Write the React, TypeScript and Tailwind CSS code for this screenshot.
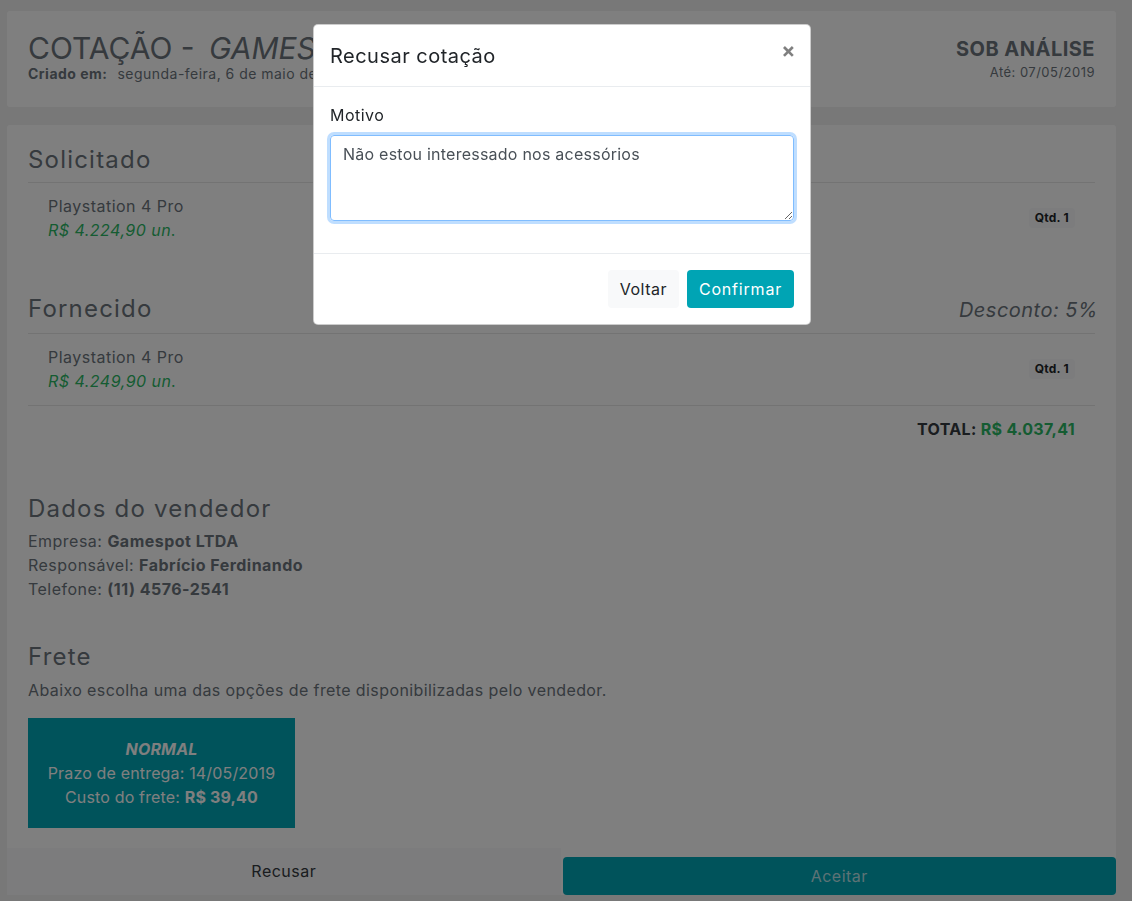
import React from "react";

function Badge() {
  return (
    <span className="rounded-[4px] bg-[#f8f9fa] px-[6px] py-[3px] text-[12px] font-bold leading-[14px] tracking-[0.02em] text-[#212529]">
      Qtd. 1
    </span>
  );
}

export default function App() {
  return (
    <div className="relative h-[901px] w-full overflow-hidden bg-[#f0f0f0] font-['Inter',sans-serif] tracking-[0.03em] text-[#6c757d]">
      <div className="ml-[7px] mr-[16px] pt-[11px]">
        {/* header card */}
        <div className="flex h-[96px] justify-between rounded-[3px] bg-white px-[21px] pt-[20px]">
          <div>
            <div className="text-[30px] leading-[34px] tracking-normal text-[#6c757d]">
              COTAÇÃO - <span className="ml-[6px] italic">GAMESPOT LTDA</span>
            </div>
            <div className="text-[14px] leading-[18px]">
              <span className="font-bold">Criado em:</span>
              <span className="ml-[10px]">segunda-feira, 6 de maio de 2019</span>
            </div>
          </div>
          <div className="pt-[6px] text-right">
            <div className="text-[20px] font-bold leading-[24px]">SOB ANÁLISE</div>
            <div className="mt-[2px] text-[13px] leading-[18px]">Até: 07/05/2019</div>
          </div>
        </div>

        {/* main card */}
        <div className="mt-[18px] rounded-[3px] bg-white">
          <div className="px-[21px] pt-[20px] pb-[20px]">
            <div className="text-[24px] leading-[29px] tracking-[0.05em]">Solicitado</div>
            <div className="mt-[8px] border-t border-[#e6e6e6]" />
            <div className="flex items-center justify-between px-[20px] pt-[11px] pb-[12px]">
              <div className="text-[16px] leading-[24px]">
                <div>Playstation 4 Pro</div>
                <div className="italic text-[#2bb865]">R$ 4.224,90 un.</div>
              </div>
              <Badge />
            </div>

            <div className="mt-[40px] flex items-baseline justify-between">
              <div className="text-[24px] leading-[29px] tracking-[0.05em]">Fornecido</div>
              <div className="-mr-[3px] text-[20px] italic leading-[29px]">Desconto: 5%</div>
            </div>
            <div className="mt-[8px] border-t border-[#e6e6e6]" />
            <div className="flex items-center justify-between px-[20px] pt-[11px] pb-[12px]">
              <div className="text-[16px] leading-[24px]">
                <div>Playstation 4 Pro</div>
                <div className="italic text-[#2bb865]">R$ 4.249,90 un.</div>
              </div>
              <Badge />
            </div>
            <div className="border-t border-[#e6e6e6]" />
            <div className="pt-[11px] pr-[20px] text-right text-[16px] font-bold leading-[24px] tracking-[0.02em] text-[#343a40]">
              TOTAL: <span className="text-[#2bb865]">R$ 4.037,41</span>
            </div>

            <div className="mt-[53px] text-[24px] leading-[29px] tracking-[0.05em]">Dados do vendedor</div>
            <div className="mt-[6px] text-[16px] leading-[24px]">
              <div>
                Empresa: <span className="font-bold">Gamespot LTDA</span>
              </div>
              <div>
                Responsável: <span className="font-bold">Fabrício Ferdinando</span>
              </div>
              <div>
                Telefone: <span className="font-bold">(11) 4576-2541</span>
              </div>
            </div>

            <div className="mt-[41px] text-[24px] leading-[29px] tracking-[0.05em]">Frete</div>
            <div className="mt-[7px] text-[16px] leading-[24px] tracking-[0.025em]">
              Abaixo escolha uma das opções de frete disponibilizadas pelo vendedor.
            </div>
            <div className="mt-[16px] flex w-[267px] flex-col items-center bg-[#00a6b6] py-[19px] text-[16px] leading-[24px] tracking-[0.01em] text-white">
              <div className="font-bold italic">NORMAL</div>
              <div>Prazo de entrega: 14/05/2019</div>
              <div>
                Custo do frete: <span className="font-bold">R$ 39,40</span>
              </div>
            </div>
          </div>

          {/* bottom buttons */}
          <div className="flex h-[47px]">
            <button className="flex h-[47px] flex-1 items-center justify-center bg-[#f8f9fa] pb-[1px] text-[16px] tracking-[0.03em] text-[#343a40]">
              Recusar
            </button>
            <div className="flex flex-1 items-end pl-[2px]">
              <button className="flex h-[38px] w-full items-center justify-center rounded-[4px] bg-[#00a6b6] text-[16px] tracking-[0.03em] text-[#bae4ea]">
                Aceitar
              </button>
            </div>
          </div>
        </div>
      </div>

      {/* backdrop */}
      <div className="fixed inset-0 bg-black/50" />

      {/* modal */}
      <div className="absolute left-[313px] top-[24px] w-[498px] rounded-[5px] border border-black/20 bg-white text-[#212529]">
        <div className="flex items-start justify-between border-b border-[#e9ecef] px-[16px] pt-[16px] pb-[15px]">
          <div className="text-[20px] leading-[30px]">Recusar cotação</div>
          <button className="-mt-[1px] -mr-[2px] text-[21px] font-bold leading-[21px] text-black/50">×</button>
        </div>
        <div className="px-[16px] pt-[16px] pb-[16px]">
          <div className="mb-[8px] text-[16px] leading-[24px]">Motivo</div>
          <textarea
            className="block h-[86px] w-full resize-y rounded-[4px] border border-[#80bdff] px-[12px] py-[6px] text-[16px] leading-[24px] tracking-[0.015em] text-[#495057] shadow-[0_0_0_3px_rgba(0,123,255,0.25)] outline-none"
            defaultValue="Não estou interessado nos acessórios"
          />
          <div className="h-[16px]" />
        </div>
        <div className="flex justify-end gap-[8px] border-t border-[#e9ecef] p-[16px]">
          <button className="h-[38px] rounded-[4px] bg-[#f8f9fa] px-[12px] text-[16px] tracking-[0.03em] text-[#212529]">Voltar</button>
          <button className="h-[38px] rounded-[4px] bg-[#00a4b4] px-[12px] text-[16px] tracking-[0.05em] text-white">Confirmar</button>
        </div>
      </div>
    </div>
  );
}
